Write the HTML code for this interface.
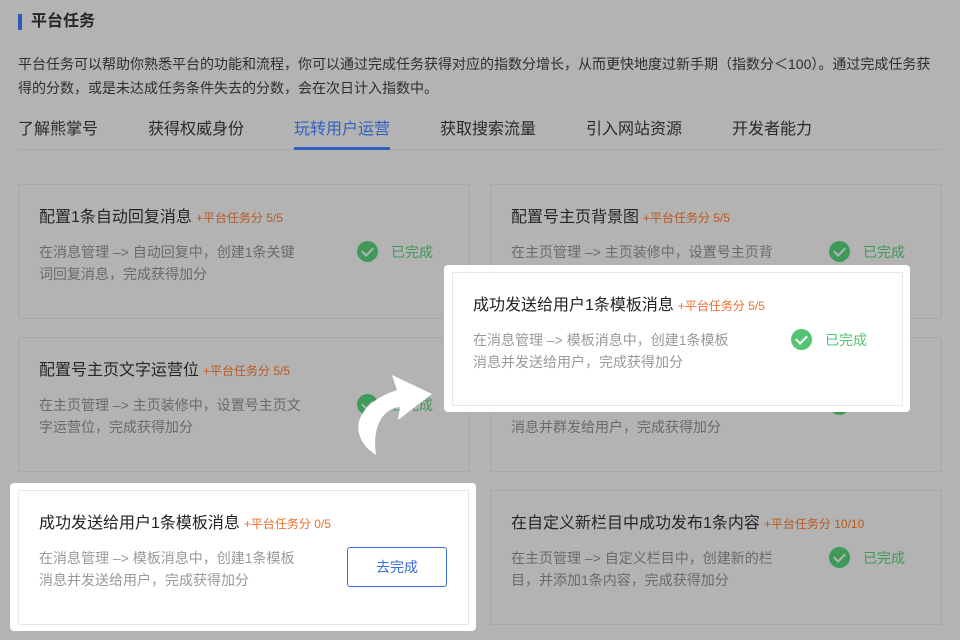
<!DOCTYPE html>
<html style="background:#b3b3b3"><head><meta charset="utf-8"><style>
*{margin:0;padding:0;box-sizing:border-box}
body{width:960px;height:640px;overflow:hidden;background:#b3b3b3;font-family:"Liberation Sans","Noto Sans CJK SC",sans-serif;position:relative;color:#2a2a2a}
.abs{position:absolute}
.h{left:18px;top:12px;font-size:16px;font-weight:bold;color:#262626;padding-left:13px;line-height:20px}
.h:before{content:"";position:absolute;left:0;top:2px;width:4px;height:16px;background:#2f56b8}
.desc{left:18px;top:52px;width:925px;font-size:14px;line-height:24px;color:#2e2e2e}
.tab{top:119px;font-size:16px;line-height:22px;color:#2a2a2a}
.card{position:absolute;width:452px;height:135px;border:1px solid #a8a8a8;background:#b3b3b3}
.card .t{position:absolute;left:20px;top:22px;font-size:16px;line-height:22px;color:#262626;white-space:nowrap}
.card .t span{font-size:12px;color:#b85a22;margin-left:4px}
.card .d{position:absolute;left:20px;top:56px;width:262px;font-size:14px;line-height:22px;color:#6a6a6a}
.card .s{position:absolute;left:338px;top:56px;font-size:14px;line-height:22px;color:#3e9a58;padding-left:34px}
.card .s:before{content:"";position:absolute;left:0;top:0;width:21px;height:21px;border-radius:50%;background:#3e9a58}
.card .s:after{content:"";position:absolute;left:7px;top:4px;width:5px;height:9px;border:solid #b3b3b3;border-width:0 2px 2px 0;transform:rotate(45deg)}
.w{background:#fff;border-radius:4px}
.wc{background:#fff;border-color:#e8e8e8}
.wc .t{color:#222}.wc .t span{color:#f26b2a}.wc .d{color:#999}
.wc .s{color:#52c472}.wc .s:before{background:#52c472}.wc .s:after{border-color:#fff}
.btn{position:absolute;left:328px;top:56px;width:100px;height:40px;border:1px solid #3a6cd9;border-radius:3px;color:#3a6cd9;font-size:14px;line-height:38px;text-align:center}
</style></head><body>
<div class="abs h">平台任务</div>
<div class="abs desc">平台任务可以帮助你熟悉平台的功能和流程，你可以通过完成任务获得对应的指数分增长，从而更快地度过新手期（指数分＜100）。通过完成任务获得的分数，或是未达成任务条件失去的分数，会在次日计入指数中。</div>
<div class="abs tab" style="left:18px">了解熊掌号</div>
<div class="abs tab" style="left:148px">获得权威身份</div>
<div class="abs tab" style="left:294px;color:#3060c4">玩转用户运营</div>
<div class="abs tab" style="left:440px">获取搜索流量</div>
<div class="abs tab" style="left:586px">引入网站资源</div>
<div class="abs tab" style="left:732px">开发者能力</div>
<div class="abs" style="left:18px;top:149px;width:922px;height:1px;background:#a6a6a6"></div>
<div class="abs" style="left:294px;top:147px;width:96px;height:3px;background:#3060c4"></div>

<div class="card" style="left:18px;top:184px"><div class="t">配置1条自动回复消息<span>+平台任务分 5/5</span></div><div class="d">在消息管理 –> 自动回复中，创建1条关键词回复消息，完成获得加分</div><div class="s">已完成</div></div>
<div class="card" style="left:490px;top:184px"><div class="t">配置号主页背景图<span>+平台任务分 5/5</span></div><div class="d">在主页管理 –> 主页装修中，设置号主页背景图，完成获得加分</div><div class="s">已完成</div></div>
<div class="card" style="left:18px;top:337px"><div class="t">配置号主页文字运营位<span>+平台任务分 5/5</span></div><div class="d">在主页管理 –> 主页装修中，设置号主页文字运营位，完成获得加分</div><div class="s">已完成</div></div>
<div class="card" style="left:490px;top:337px"><div class="t">成功群发消息<span>+平台任务分 5/5</span></div><div class="d">在消息管理 –> 群发消息中，创建1条模板消息并群发给用户，完成获得加分</div><div class="s">已完成</div></div>
<div class="card" style="left:490px;top:490px"><div class="t">在自定义新栏目中成功发布1条内容<span>+平台任务分 10/10</span></div><div class="d">在主页管理 –> 自定义栏目中，创建新的栏目，并添加1条内容，完成获得加分</div><div class="s">已完成</div></div>

<div class="abs w" style="left:10px;top:483px;width:466px;height:148px"></div>
<div class="card wc" style="left:18px;top:490px;width:451px"><div class="t">成功发送给用户1条模板消息<span>+平台任务分 0/5</span></div><div class="d">在消息管理 –> 模板消息中，创建1条模板消息并发送给用户，完成获得加分</div><div class="btn">去完成</div></div>

<div class="abs w" style="left:444px;top:265px;width:466px;height:147px"></div>
<div class="card wc" style="left:452px;top:272px;width:451px;height:134px"><div class="t">成功发送给用户1条模板消息<span>+平台任务分 5/5</span></div><div class="d">在消息管理 –> 模板消息中，创建1条模板消息并发送给用户，完成获得加分</div><div class="s">已完成</div></div>

<svg class="abs" style="left:340px;top:365px" width="100" height="100" viewBox="0 0 100 100">
<path d="M52 10 L92 29 L58 55 L60 42 C42 44 32 62 36 90 C8 72 12 40 57 25 Z" fill="#fff"/>
</svg>
</body></html>
